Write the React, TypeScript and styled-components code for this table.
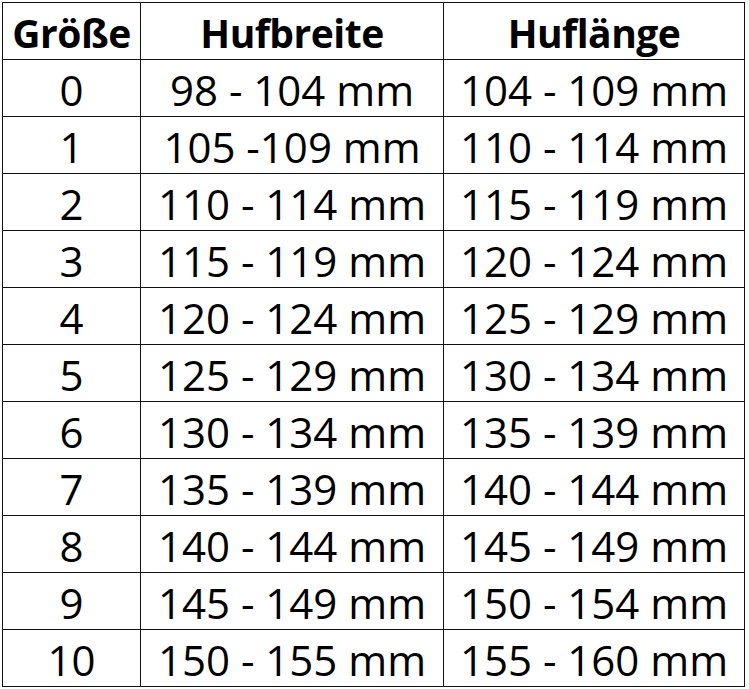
import React from 'react';
import styled, { createGlobalStyle } from 'styled-components';

type SizeRow = {
    size: string,
    width: string,
    length: string
};

const rows: SizeRow[] = [
    { size: '0', width: '98 - 104 mm', length: '104 - 109 mm' },
    { size: '1', width: '105 -109 mm', length: '110 - 114 mm' },
    { size: '2', width: '110 - 114 mm', length: '115 - 119 mm' },
    { size: '3', width: '115 - 119 mm', length: '120 - 124 mm' },
    { size: '4', width: '120 - 124 mm', length: '125 - 129 mm' },
    { size: '5', width: '125 - 129 mm', length: '130 - 134 mm' },
    { size: '6', width: '130 - 134 mm', length: '135 - 139 mm' },
    { size: '7', width: '135 - 139 mm', length: '140 - 144 mm' },
    { size: '8', width: '140 - 144 mm', length: '145 - 149 mm' },
    { size: '9', width: '145 - 149 mm', length: '150 - 154 mm' },
    { size: '10', width: '150 - 155 mm', length: '155 - 160 mm' }
];

const GlobalStyle = createGlobalStyle`
    html, body {
        margin: 0;
        padding: 0;
        background: #fff;
    }
    body {
        font-family: "Open Sans", "Noto Sans", sans-serif;
        color: #000;
    }
`;

const Page = styled.div`
    padding: 2px 0 0 2px;
`;

const SizeTable = styled.div`
    display: grid;
    grid-template-columns: 138px 303px 301px;
    grid-auto-rows: 57px;
    width: max-content;
    border-top: 1px solid #111;
    border-left: 1px solid #111;
`;

const Cell = styled.div<{ $head?: boolean }>`
    display: flex;
    align-items: center;
    justify-content: center;
    padding-top: 3px;
    border-right: 1px solid #111;
    border-bottom: 1px solid #111;
    font-size: ${p => (p.$head ? '39px' : '42px')};
    font-weight: ${p => (p.$head ? 700 : 400)};
    letter-spacing: ${p => (p.$head ? '-0.5px' : '0')};
    white-space: nowrap;
    overflow: hidden;
`;

export default function App() {
    return (
        <Page>
            <GlobalStyle />
            <SizeTable>
                <Cell $head>Größe</Cell>
                <Cell $head>Hufbreite</Cell>
                <Cell $head>Huflänge</Cell>
                {rows.map(r => (
                    <React.Fragment key={r.size}>
                        <Cell>{r.size}</Cell>
                        <Cell>{r.width}</Cell>
                        <Cell>{r.length}</Cell>
                    </React.Fragment>
                ))}
            </SizeTable>
        </Page>
    );
}
